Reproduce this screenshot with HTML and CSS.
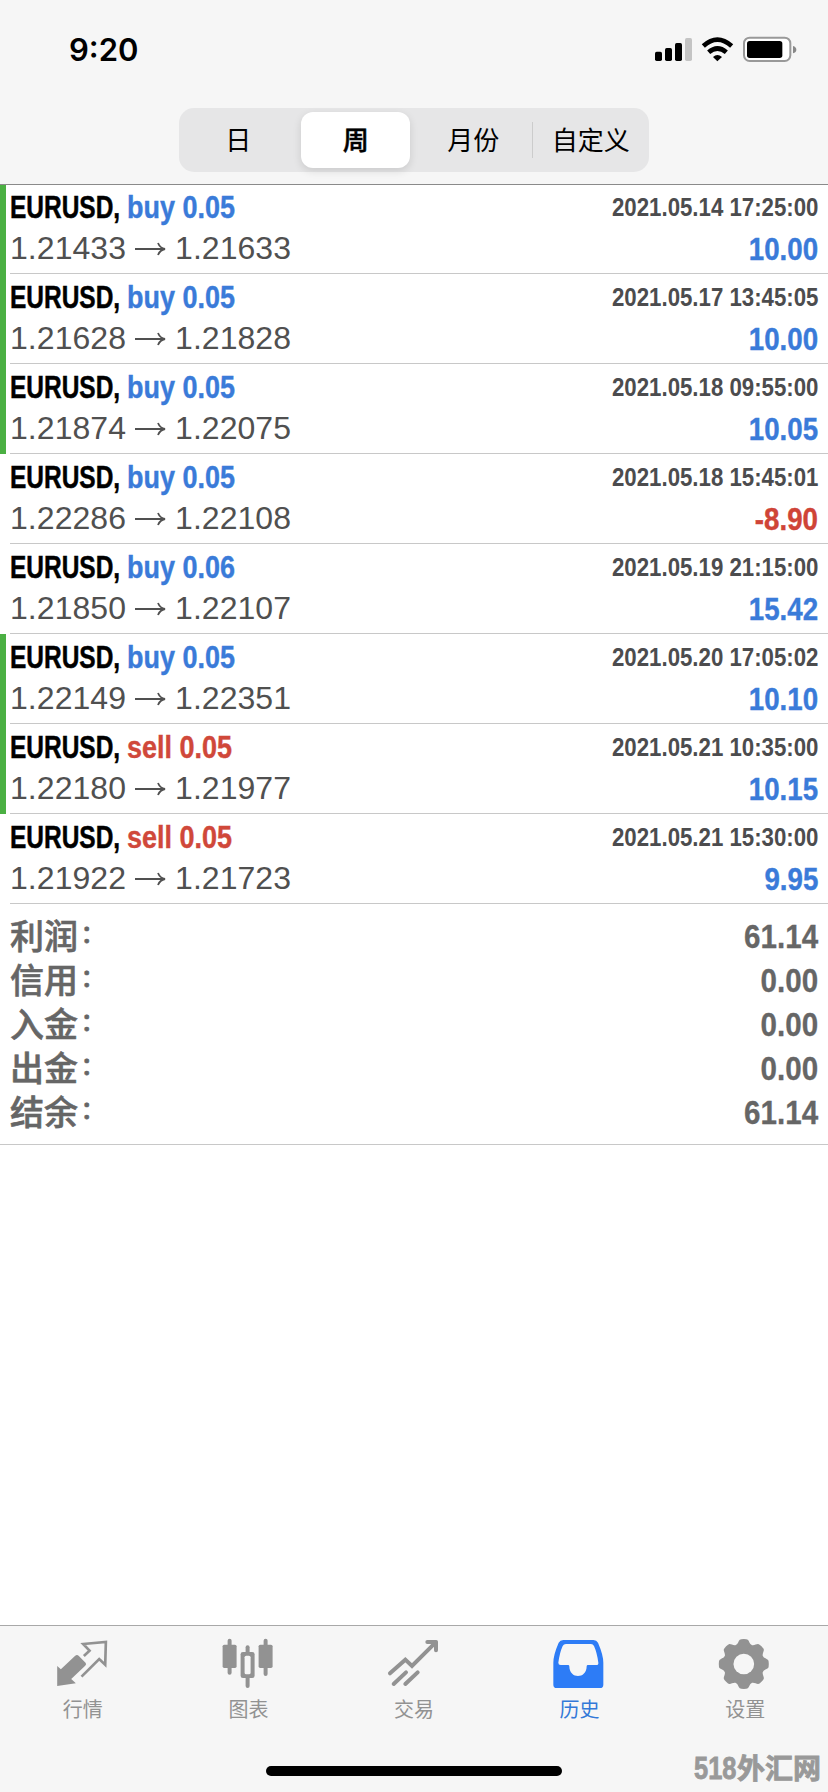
FILE: index.html
```html
<!DOCTYPE html>
<html lang="zh-CN">
<head>
<meta charset="utf-8">
<title>历史</title>
<link rel="stylesheet" href="styles.css">
</head>
<body>
<div class="app">
  <header class="header">
    <div class="status">
      <span class="time">9:20</span>
      <svg class="status-icons" width="146" height="30" viewBox="0 0 438 90">
        <g>
          <rect x="3" y="50" width="21" height="28" rx="5"/>
          <rect x="33" y="39" width="21" height="39" rx="5"/>
          <rect x="63" y="24" width="21" height="54" rx="5"/>
          <rect x="93" y="9" width="21" height="69" rx="5" fill="#c4c4c4"/>
        </g>
        <g fill="none" stroke="#000" stroke-width="14">
          <path d="M148 33Q190 -5 233 33"/>
          <path d="M164 52Q190 29 217 52"/>
        </g>
        <path d="M177 66Q190 54 204 66L190 79Z"/>
        <rect x="270" y="8" width="139" height="70" rx="17" fill="#fff" stroke="#999" stroke-width="6"/>
        <rect x="279" y="18" width="106" height="51" rx="8"/>
        <path d="M417 33Q427 36 427 44T417 55Z" fill="#888"/>
      </svg>
    </div>
    <nav class="segments">
      <span class="segment">日</span>
      <span class="segment selected">周</span>
      <span class="segment">月份</span>
      <span class="segment divided">自定义</span>
    </nav>
  </header>

  <main class="content">
    <ul class="deals" id="deals"></ul>
    <dl class="summary">
      <div class="total"><dt>利润<i>：</i></dt><dd>61.14</dd></div>
      <div class="total"><dt>信用<i>：</i></dt><dd>0.00</dd></div>
      <div class="total"><dt>入金<i>：</i></dt><dd>0.00</dd></div>
      <div class="total"><dt>出金<i>：</i></dt><dd>0.00</dd></div>
      <div class="total"><dt>结余<i>：</i></dt><dd>61.14</dd></div>
    </dl>
  </main>

  <footer class="tabbar">
    <div class="tabs">
      <div class="tab">
        <svg width="60" height="54" viewBox="158.4 78 180 162">
          <path d="M171 168L182 178L225 137Q231 133 236 138L256 158Q260 162 255 167L213 207L227 220L171 228Z" fill="#929292"/>
          <path d="M251 138L268 122L249 102L317 96L315 164L297 147L244 200" fill="none" stroke="#929292" stroke-width="8"/>
        </svg>
        <span>行情</span>
      </div>
      <div class="tab">
        <svg width="60" height="54" viewBox="655.2 78 180 162">
          <g fill="#929292">
            <rect x="684" y="86" width="12" height="108" rx="6"/>
            <rect x="669" y="104" width="42" height="70" rx="5"/>
            <rect x="792" y="86" width="12" height="112" rx="6"/>
            <rect x="777" y="104" width="42" height="70" rx="5"/>
            <rect x="738" y="106" width="12" height="128" rx="6"/>
            <rect x="723" y="126" width="42" height="78" rx="7"/>
          </g>
          <rect x="735" y="137" width="18" height="56" rx="5" fill="#f6f6f6"/>
        </svg>
        <span>图表</span>
      </div>
      <div class="tab">
        <svg width="60" height="54" viewBox="252 78 180 162">
          <g fill="none" stroke="#929292" stroke-width="12" stroke-linecap="round">
            <path d="M270 190L316 149L336 168L404 100"/>
            <path d="M281 222L318 187M316 222L353 187"/>
          </g>
          <path d="M382 90H409Q414 90 414 95V121Q414 127 408 127T402 121V111L393 102H382Q376 102 376 96T382 90Z" fill="#929292"/>
        </svg>
        <span>交易</span>
      </div>
      <div class="tab active">
        <svg width="60" height="54" viewBox="749 78 180 162">
          <path fill-rule="evenodd" fill="#2d7cf6" d="M789 90H879Q889 90 893 98Q909 135 909 158V224Q909 234 899 234H769Q759 234 759 224V158Q759 135 775 98Q779 90 789 90ZM797 102Q790 102 787 108Q778 128 774 158Q774 165 781 165H803Q807 165 807 169C807 208 859 208 859 169Q859 165 863 165H888Q895 165 894 158Q890 128 881 108Q878 102 872 102Z"/>
        </svg>
        <span>历史</span>
      </div>
      <div class="tab">
        <svg width="60" height="54" viewBox="465.6 78 180 162">
          <g transform="translate(552 162)" fill="#929292">
            <path id="tooth" d="M-24 -57C-17 -60 -16 -70 -12 -73Q-9 -75 0 -75T12 -73C16 -70 17 -60 24 -57V57C17 60 16 70 12 73Q9 75 0 75T-12 73C-16 70 -17 60 -24 57Z"/>
            <use href="#tooth" transform="rotate(45)"/>
            <use href="#tooth" transform="rotate(90)"/>
            <use href="#tooth" transform="rotate(135)"/>
            <circle r="31" fill="#f6f6f6"/>
          </g>
        </svg>
        <span>设置</span>
      </div>
    </div>
    <div class="home-indicator"></div>
    <div class="watermark"><b>518</b>外汇网</div>
  </footer>
</div>
<script src="app.js"></script>
</body>
</html>
```
FILE: styles.css
```css
* { box-sizing: border-box; }
body { margin: 0; background: #fff; }
.app {
  display: flex;
  flex-direction: column;
  width: 828px;
  height: 1792px;
  overflow: hidden;
  font-family: "Liberation Sans", "Noto Sans CJK SC", sans-serif;
}
.header {
  height: 185px;
  background: #f6f6f6;
  border-bottom: 1px solid #8a8a8a;
}
.status {
  display: flex;
  justify-content: space-between;
  align-items: center;
  height: 108px;
  padding: 0 23px 8px 69px;
}
.time {
  font: 600 31px/40px Inter, sans-serif;
}
.status-icons { margin-right: 5px; }
.segments {
  display: grid;
  grid-template-columns: repeat(4, 1fr);
  width: 470px;
  height: 64px;
  margin-left: 179px;
  padding: 4px 0;
  border-radius: 15px;
  background: #e6e6e7;
}
.segment {
  display: flex;
  align-items: center;
  justify-content: center;
  margin: 0 4px;
  padding: 0 0 2px 1px;
  font: 400 26px/54px "Noto Sans CJK SC", sans-serif;
}
.selected {
  border-radius: 12px;
  background: #fff;
  font-weight: 500;
  -webkit-text-stroke: .5px #000;
  box-shadow: 0 3px 8px rgba(0, 0, 0, .12);
}
.divided {
  margin: 0;
  background: linear-gradient(#ccc, #ccc) 0 10px / 1px 36px no-repeat;
}
.content { flex: 1; }
.deals { margin: 0; padding: 0; list-style: none; }
.deal {
  height: 90px;
  display: flex;
  border-left: 6px solid transparent;
}
.deal:first-child { height: 89px; }
.closed-tp {
  border-image: linear-gradient(#4bb043 calc(100% - 1px), #c9e6c7 0) 1;
  border-width: 0 0 0 6px;
}
.deal-body {
  flex: 1;
  display: flex;
  justify-content: space-between;
  margin-left: 4px;
  padding: 0 10px 0 0;
  border-bottom: 1px solid #c8c8c8;
  white-space: nowrap;
}
.deal-left, .deal-right { display: flex; flex-direction: column; justify-content: flex-end; }
.deal-right { align-items: flex-end; }
.title { display: flex; height: 41px; font: 700 32px/41px "Liberation Sans", sans-serif; }
.symbol {
  width: 117px;
  transform: scaleX(.765);
  transform-origin: 0 50%;
  -webkit-text-stroke: .5px #000;
}
.side {
  transform: scaleX(.843);
  transform-origin: 0 50%;
  color: #3a7bd9;
  -webkit-text-stroke: .4px currentColor;
}
.side.sell { color: #d0483a; }
.price {
  display: flex;
  align-items: center;
  height: 41px;
  margin-bottom: 4px;
  font-size: 32px;
  line-height: 41px;
  color: #505050;
}
.from, .to { letter-spacing: .05px; }
.arrow { width: 31px; height: 14px; margin: 0 9px 0 9px; }
.date {
  height: 41px;
  font: 700 26px/41px "Liberation Sans", sans-serif;
  color: #4c4c4e;
  transform: scaleX(.855);
  transform-origin: 100% 50%;
}
.profit {
  height: 41px;
  margin-bottom: 4px;
  font: 700 32px/42px "Liberation Sans", sans-serif;
  color: #3a7bd9;
  -webkit-text-stroke: .4px currentColor;
  transform: scaleX(.865);
  transform-origin: 100% 50%;
}
.loss { color: #cf4437; }
.summary {
  height: 241px;
  margin: 0;
  padding: 9px 10px 0;
  border-bottom: 1px solid #c8c8c8;
  color: #666;
}
.total { display: flex; justify-content: space-between; height: 44px; }
.total dt {
  display: flex;
  font: 500 34px/44px "Noto Sans CJK SC", sans-serif;
  -webkit-text-stroke: .6px currentColor;
}
.total i {
  position: relative;
  left: 2.5px;
  top: -3px;
  font-size: 25px;
  font-style: normal;
}
.total dd {
  margin: 0;
  font: 700 34px/46px "Liberation Sans", sans-serif;
  -webkit-text-stroke: .3px currentColor;
  transform: scaleX(.87);
  transform-origin: 100% 50%;
}
.tabbar {
  position: relative;
  height: 167px;
  border-top: 1px solid #a8a8a8;
  background: #f6f6f6;
}
.tabs { display: grid; grid-template-columns: repeat(5, 1fr); padding-top: 10px; }
.tab {
  display: flex;
  flex-direction: column;
  align-items: center;
  font: 400 20px/37px "Noto Sans CJK SC", sans-serif;
  color: #929292;
}
.tab svg { display: block; }
.active { color: #3379d8; }
.home-indicator {
  width: 296px;
  height: 10px;
  margin: 39px auto 0;
  border-radius: 5px;
  background: #000;
}
.watermark {
  position: absolute;
  right: 7px;
  bottom: 3px;
  font: 700 28px/40px "Noto Sans CJK SC", sans-serif;
  color: #999;
  -webkit-text-stroke: .8px #999;
  white-space: nowrap;
}
.watermark b {
  display: inline-block;
  width: 43px;
  font: 700 31px/40px "Liberation Sans", sans-serif;
  transform: scaleX(.82);
  transform-origin: 0 50%;
}
```
FILE: app.js
```js
const deals = [
  ['buy', '0.05', '1.21433', '1.21633', '2021.05.14 17:25:00', '10.00', true],
  ['buy', '0.05', '1.21628', '1.21828', '2021.05.17 13:45:05', '10.00', true],
  ['buy', '0.05', '1.21874', '1.22075', '2021.05.18 09:55:00', '10.05', true],
  ['buy', '0.05', '1.22286', '1.22108', '2021.05.18 15:45:01', '-8.90', false],
  ['buy', '0.06', '1.21850', '1.22107', '2021.05.19 21:15:00', '15.42', false],
  ['buy', '0.05', '1.22149', '1.22351', '2021.05.20 17:05:02', '10.10', true],
  ['sell', '0.05', '1.22180', '1.21977', '2021.05.21 10:35:00', '10.15', true],
  ['sell', '0.05', '1.21922', '1.21723', '2021.05.21 15:30:00', '9.95', false],
];

document.getElementById('deals').innerHTML = deals.map(([side, lots, from, to, date, profit, tp]) => `
  <li class="deal ${tp ? 'closed-tp' : ''}">
    <div class="deal-body">
      <div class="deal-left">
        <div class="title"><span class="symbol">EURUSD,</span><span class="side ${side}">${side} ${lots}</span></div>
        <div class="price"><span class="from">${from}</span><svg class="arrow" viewBox="0 0 31 14" fill="none" stroke="#505050" stroke-width="1.8"><path d="M0 7H30M23 1Q25 6 30 7Q25 8 23 13"/></svg><span class="to">${to}</span></div>
      </div>
      <div class="deal-right">
        <div class="date">${date}</div>
        <div class="profit ${profit.startsWith('-') ? 'loss' : ''}">${profit}</div>
      </div>
    </div>
  </li>`).join('');
```
